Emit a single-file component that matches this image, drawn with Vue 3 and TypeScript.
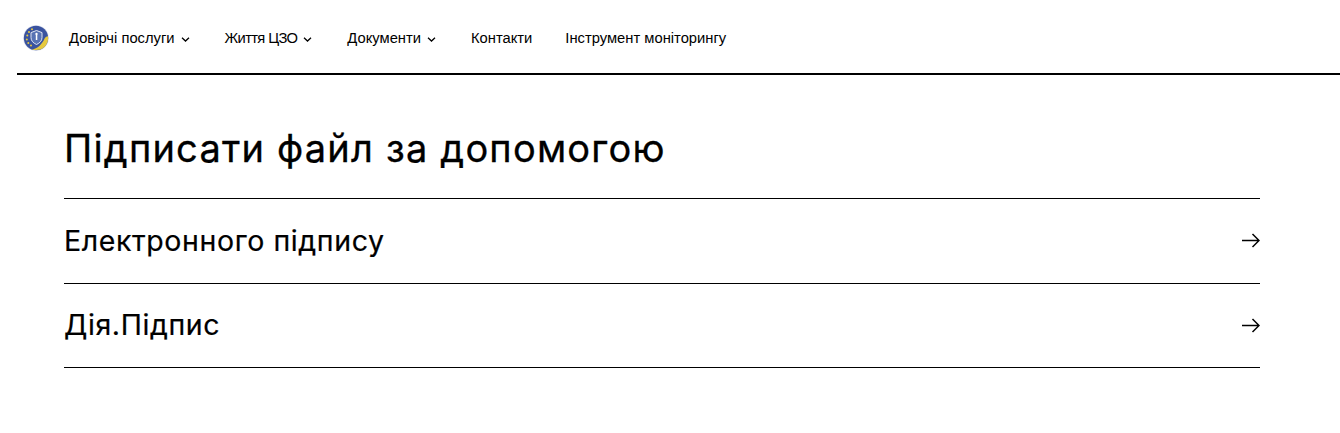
<script setup lang="ts">
const navItems = [
  { label: 'Довірчі послуги', caret: true, tight: false },
  { label: 'Життя ЦЗО', caret: true, tight: true },
  { label: 'Документи', caret: true, tight: false },
  { label: 'Контакти', caret: false, tight: false },
  { label: 'Інструмент моніторингу', caret: false, tight: false },
]

const signOptions = ['Електронного підпису', 'Дія.Підпис']
</script>

<template>
  <div class="page">
    <header class="header">
      <svg class="logo" width="26" height="26" viewBox="0 0 26 26">
        <circle cx="13" cy="13" r="13" fill="#e8ebf3" />
        <circle cx="13" cy="13" r="12.2" fill="#3a539f" />
        <path d="M9 24.5C14.5 23.5 19 19.5 21.6 13.5C22.2 12.4 23.4 11.5 25 11.2C25.6 15.5 24 20 20.5 22.8C17.5 25 13 25.6 9 24.5Z" fill="#e6c93f" />
        <path d="M13.5 5.5L19 7.6V12.5C19 15.8 16.8 18 13.5 19.5C10.2 18 8 15.8 8 12.5V7.6Z" fill="#5873b4" stroke="#dfe5f1" stroke-width="1" />
        <rect x="12.8" y="10" width="1.5" height="5" fill="#fff" />
        <circle cx="13.5" cy="9" r="1.2" fill="#fff" />
        <g fill="#e6c93f">
          <circle cx="4.3" cy="10.5" r="1" />
          <circle cx="6" cy="7" r="1" />
          <circle cx="9" cy="4.3" r="1" />
          <circle cx="3.8" cy="14.5" r="1" />
          <circle cx="5.3" cy="18" r="1" />
          <circle cx="8" cy="20.5" r="1" />
        </g>
      </svg>
      <nav class="nav">
        <a v-for="item in navItems" :key="item.label" class="nav-item" :class="{ tight: item.tight }" href="#">
          <span>{{ item.label }}</span>
          <svg v-if="item.caret" class="caret" width="9" height="5" viewBox="0 0 9 5" fill="none">
            <path d="M1 .8L4.5 4L8 .8" stroke="#000" stroke-width="1.3" />
          </svg>
        </a>
      </nav>
    </header>

    <main class="content">
      <h1 class="title">Підписати файл за допомогою</h1>
      <ul class="options">
        <li v-for="option in signOptions" :key="option" class="option">
          <span class="option-label">{{ option }}</span>
          <svg class="arrow" width="18" height="15" viewBox="0 0 18 15" fill="none">
            <path d="M0 7.5H17M10.5 1L17 7.5L10.5 14" stroke="#000" stroke-width="1.5" />
          </svg>
        </li>
      </ul>
    </main>
  </div>
</template>

<style>
body {
  margin: 0;
  background: #fff;
}
</style>

<style scoped>
.page {
  height: 433px;
  overflow: hidden;
  font-family: Inter, "Liberation Sans", sans-serif;
  color: #000;
}

.header {
  display: flex;
  align-items: center;
  height: 75px;
  margin-left: 17px;
  padding: 3px 0 0 6px;
  box-sizing: border-box;
  border-bottom: 2px solid #000;
}

.logo {
  flex: none;
  margin-right: 20px;
}

.nav {
  display: flex;
  gap: 33px;
}

.nav-item {
  display: flex;
  align-items: center;
  gap: 6px;
  font-family: "Liberation Sans", sans-serif;
  font-size: 14.75px;
  color: #000;
  text-decoration: none;
}

.tight {
  letter-spacing: -0.65px;
}

.caret {
  margin: 2px 2px 0 0;
}

.content {
  padding: 0 80px 0 64px;
}

.title {
  margin: 0;
  padding: 50px 0 26px;
  font-size: 38px;
  line-height: 47px;
  font-weight: 400;
  letter-spacing: 1.2px;
  -webkit-text-stroke: 0.3px #000;
}

.options {
  margin: 0;
  padding: 0;
  list-style: none;
  border-top: 1px solid #000;
}

.option {
  display: flex;
  align-items: center;
  justify-content: space-between;
  height: 83.6px;
  border-bottom: 1px solid #000;
  font-size: 28.5px;
  font-weight: 400;
  letter-spacing: 0.6px;
  -webkit-text-stroke: 0.2px #000;
}

.option-label {
  margin-bottom: 0.8px;
}

.arrow {
  flex: none;
}
</style>
